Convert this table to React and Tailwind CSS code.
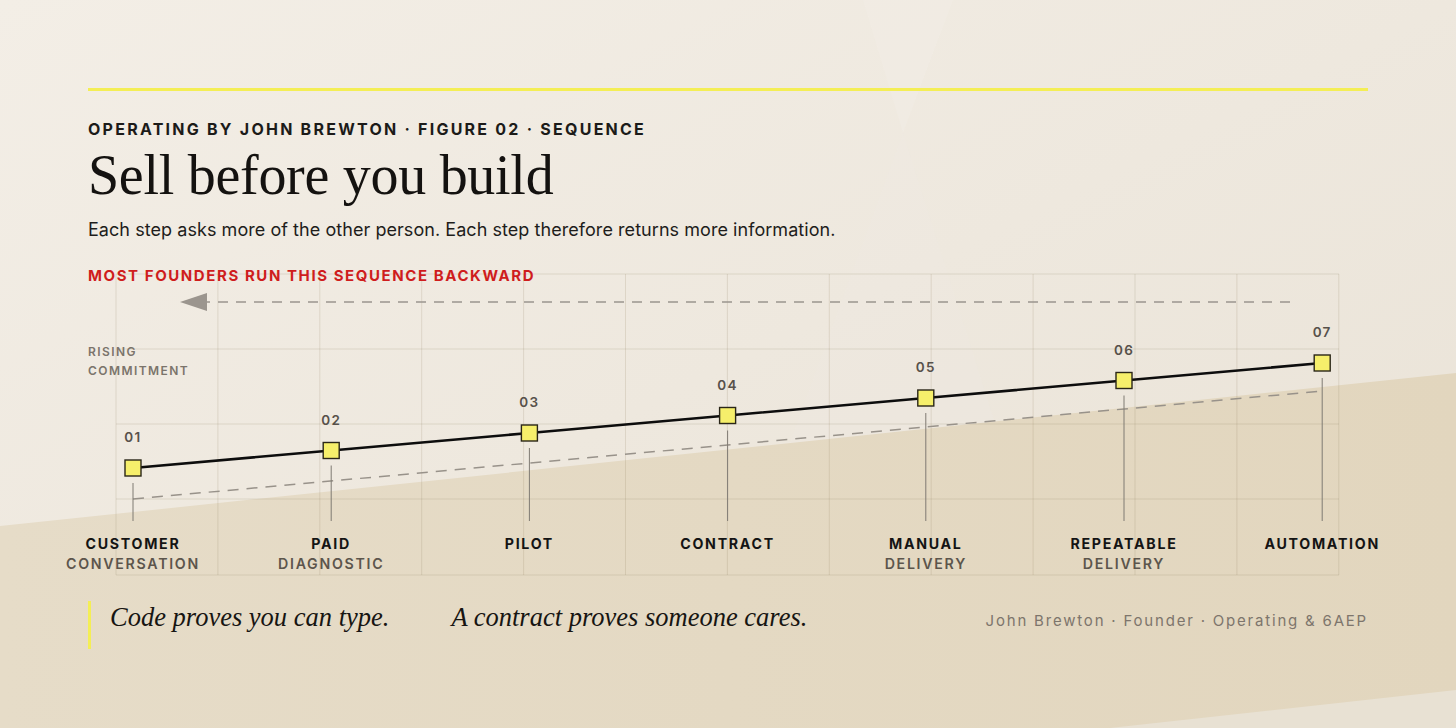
import React from 'react'

const STEPS = [
  { n: '01', a: 'CUSTOMER', b: 'CONVERSATION' },
  { n: '02', a: 'PAID', b: 'DIAGNOSTIC' },
  { n: '03', a: 'PILOT' },
  { n: '04', a: 'CONTRACT' },
  { n: '05', a: 'MANUAL', b: 'DELIVERY' },
  { n: '06', a: 'REPEATABLE', b: 'DELIVERY' },
  { n: '07', a: 'AUTOMATION' },
]

// chart coords are local to the chart box (page x - 88, page y - 262)
const nodes = STEPS.map((s, i) => ({ ...s, x: 45 + i * 198.2, y: 206 - i * 17.5 }))
const cols = Array.from({ length: 13 }, (_, i) => 28 + i * 101.9)
const rows = [12, 87, 162, 237, 313]

function Background() {
  return (
    <svg className="absolute inset-0 w-full h-full" viewBox="0 0 1456 728" preserveAspectRatio="none">
      <defs>
        <linearGradient id="top" x1="0" y1="0" x2="1" y2="1">
          <stop offset="0" stopColor="#f3eee6" />
          <stop offset="1" stopColor="#e9e2d6" />
        </linearGradient>
        <linearGradient id="tan" x1="0" y1="0" x2="1" y2="0">
          <stop offset="0" stopColor="#e6dcc8" />
          <stop offset="1" stopColor="#e2d6be" />
        </linearGradient>
      </defs>
      <rect width="1456" height="728" fill="url(#top)" />
      <polygon points="863,0 953,0 903,133" fill="#f7f3ec" opacity="0.22" />
      <polygon points="903,133 1010,470 780,470" fill="#f2ede4" opacity="0.2" />
      <polygon points="0,526 1456,373 1456,728 0,728" fill="url(#tan)" />
      <polygon points="1110,728 1456,690 1456,728" fill="#e8e1d3" />
    </svg>
  )
}

function Chart() {
  return (
    <div className="relative w-[1280px] h-[318px]">
      <svg className="absolute inset-0" width="1280" height="318" viewBox="0 0 1280 318">
        {cols.map(x => (
          <line key={x} x1={x} y1={12} x2={x} y2={313} stroke="#8c7a5a" strokeOpacity="0.18" strokeWidth="1" />
        ))}
        {rows.map(y => (
          <line key={y} x1={28} y1={y} x2={1251} y2={y} stroke="#8c7a5a" strokeOpacity="0.18" strokeWidth="1" />
        ))}
        {/* backward arrow */}
        <line x1={1202} y1={40} x2={119} y2={40} stroke="#9b958e" strokeWidth="1.5" strokeDasharray="10 8" />
        <polygon points="92,40 119,31 119,49" fill="#9b958e" />
        {/* lower baseline */}
        <line x1={45} y1={237} x2={1234} y2={129} stroke="#98928a" strokeWidth="1.5" strokeDasharray="11 8" />
        {nodes.map(p => (
          <line key={p.n} x1={p.x} y1={p.y + 15} x2={p.x} y2={259} stroke="#7f7a73" strokeWidth="1" />
        ))}
        <polyline points={nodes.map(p => `${p.x},${p.y}`).join(' ')} fill="none" stroke="#0d0d0d" strokeWidth="2.6" />
        {nodes.map(p => (
          <rect key={p.n} x={p.x - 8} y={p.y - 8} width="16" height="16" fill="#f6ef6b" stroke="#2a2618" strokeWidth="1.4" />
        ))}
      </svg>

      <div className="absolute left-0 top-[6px] text-[15px] font-bold tracking-[0.105em] text-[#cf1d1d] leading-none">
        MOST FOUNDERS RUN THIS SEQUENCE BACKWARD
      </div>
      <div className="absolute left-0 top-[80px] text-[12px] font-semibold tracking-[0.12em] text-[#7b746b] leading-[19px]">
        RISING<br />COMMITMENT
      </div>

      {nodes.map(p => (
        <div key={p.n} className="absolute" style={{ left: p.x, top: p.y - 37 }}>
          <div className="-translate-x-1/2 text-[13.5px] font-semibold tracking-[0.1em] text-[#57514a] leading-none">{p.n}</div>
        </div>
      ))}

      {nodes.map(p => (
        <div key={p.n + 'l'} className="absolute top-[272px]" style={{ left: p.x }}>
          <div className="-translate-x-1/2 flex flex-col items-center whitespace-nowrap text-[14.2px] tracking-[0.12em] leading-[20px]">
            <span className="font-bold text-[#141414]">{p.a}</span>
            {p.b && <span className="font-semibold text-[#5c554c]">{p.b}</span>}
          </div>
        </div>
      ))}
    </div>
  )
}

export default function App() {
  return (
    <div className="relative w-[1456px] h-[728px] overflow-hidden" style={{ fontFamily: 'Inter, "Noto Sans", sans-serif' }}>
      <Background />
      <div className="relative flex flex-col px-[88px] pt-[88px]">
        <div className="h-[3px] bg-[#f4ee55]" />
        <div className="mt-[28px] text-[16px] font-bold tracking-[0.14em] text-[#1c1b19] leading-[20px]">
          OPERATING BY JOHN BREWTON · FIGURE 02 · SEQUENCE
        </div>
        <h1 className="mt-[6px] text-[56px] leading-[60px] text-[#141210] tracking-[-0.005em]" style={{ fontFamily: '"Liberation Serif", serif' }}>
          Sell before you build
        </h1>
        <p className="mt-[13px] text-[18px] leading-[24px] text-[#1e1d1b] tracking-[0.003em]">
          Each step asks more of the other person. Each step therefore returns more information.
        </p>
        <div className="mt-[20px]">
          <Chart />
        </div>
        <div className="mt-[21px] flex items-start justify-between">
          <div className="flex items-start">
            <div className="w-[3px] h-[48px] bg-[#f4ee55]" />
            <div className="ml-[19px] flex gap-[62px] text-[26.5px] italic leading-[32px] text-[#171512]" style={{ fontFamily: '"Liberation Serif", serif' }}>
              <span>Code proves you can type.</span>
              <span>A contract proves someone cares.</span>
            </div>
          </div>
          <div className="mt-[11px] text-[15px] tracking-[0.12em] text-[#7d756c] leading-[18px]">
            John Brewton · Founder · Operating &amp; 6AEP
          </div>
        </div>
      </div>
    </div>
  )
}
